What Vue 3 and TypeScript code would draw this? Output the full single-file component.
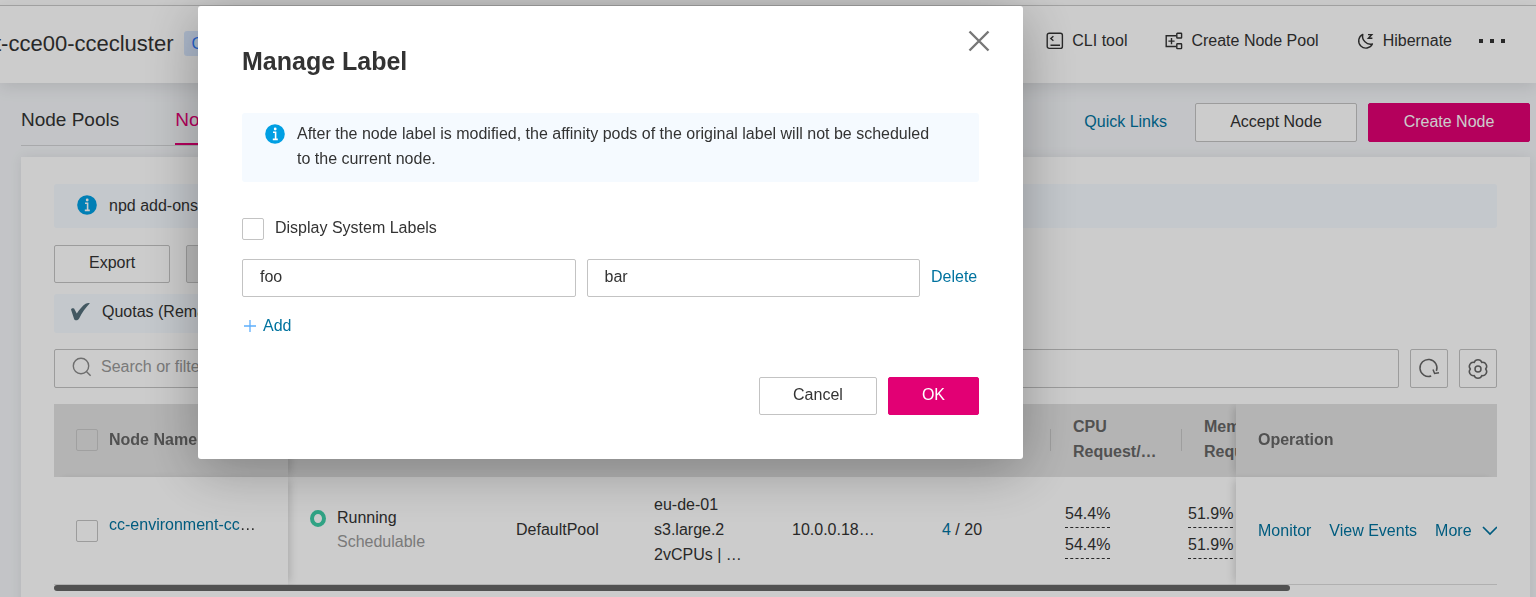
<script setup lang="ts">
import { ref } from 'vue'

interface LabelRow {
  id: number
  key: string
  value: string
}

const showSystem = ref(false)
const search = ref('')
const labels = ref<LabelRow[]>([{ id: 1, key: 'foo', value: 'bar' }])
const dialogOpen = ref(true)

const scrollThumb = 1443 / 1685

function addLabel() {
  labels.value.push({ id: Date.now(), key: '', value: '' })
}
function removeLabel(id: number) {
  labels.value = labels.value.filter((l) => l.id !== id)
}
</script>

<template>
  <div class="page">
    <header class="topbar">
      <div class="cluster">
        <h1>t-cce00-ccecluster</h1>
        <span class="badge">CCE</span>
      </div>
      <nav class="top-actions">
        <button type="button" class="plain">
          <svg width="18" height="18" viewBox="0 0 18 18" fill="none" stroke="currentColor" stroke-width="1.4">
            <rect x="1.2" y="1.2" width="15.2" height="15.2" rx="2" />
            <path d="M7.4 4.2 4.8 6.5 7.4 8.8M4.5 13.2H14" />
          </svg>
          CLI tool
        </button>
        <button type="button" class="plain">
          <svg width="18" height="18" viewBox="0 0 18 18" fill="none" stroke="currentColor" stroke-width="1.4">
            <path d="M11.2 3.7H1.2v10.8h10M3.4 9.1h6.2M6.5 6v6.2" />
            <rect x="11.8" y="1.2" width="4.8" height="4.8" rx="0.6" />
            <rect x="11.8" y="11.8" width="4.8" height="4.8" rx="0.6" />
          </svg>
          Create Node Pool
        </button>
        <button type="button" class="plain">
          <svg width="18" height="18" viewBox="0 0 18 18" fill="none" stroke="currentColor" stroke-width="1.4">
            <path d="M5.8 2.4a7.2 7.2 0 1 0 9.6 9.6A8 8 0 0 1 5.8 2.4Z" stroke-linejoin="round" />
            <path d="M11 2.6h3.8l-3.4 3.6h4" />
          </svg>
          Hibernate
        </button>
        <button type="button" class="plain dots" aria-label="More actions">
          <svg width="28" height="6" viewBox="0 0 28 6" fill="currentColor">
            <rect x="1" y="1" width="4" height="4" />
            <rect x="12" y="1" width="4" height="4" />
            <rect x="23" y="1" width="4" height="4" />
          </svg>
        </button>
      </nav>
    </header>

    <main class="content">
      <div class="toolbar">
        <nav class="tabs">
          <a href="#pools" class="tab">Node Pools</a>
          <a href="#nodes" class="tab active">Nodes</a>
        </nav>
        <div class="toolbar-actions">
          <a href="#links" class="link">Quick Links</a>
          <button type="button" class="btn">Accept Node</button>
          <button type="button" class="btn primary">Create Node</button>
        </div>
      </div>

      <section class="panel">
        <div class="notice">
          <svg class="info" width="20" height="20" viewBox="0 0 20 20">
            <circle cx="10" cy="10" r="9.8" fill="#009fe3" />
            <circle cx="10.2" cy="5" r="1.4" fill="#fff" />
            <path d="M8 8.2h2.6v6.8M7.8 15.4h5" fill="none" stroke="#fff" stroke-width="1.6" />
          </svg>
          <span>npd add-ons</span>
        </div>
        <div class="buttons">
          <button type="button" class="btn">Export</button>
          <button type="button" class="btn" disabled>Label</button>
        </div>
        <div class="quota">
          <svg width="20" height="20" viewBox="0 0 20 20">
            <path d="M1 7.4C1.6 6 4 5.8 4.6 7.4L6.8 11.4C9.4 7.4 12.4 4 15.6 1.8 17 .9 19.2.6 19.8 1.2 15.6 5.6 12 10.4 9.4 16 8.4 18.4 5.2 19.2 4.2 17.2Z" fill="#546e7a" />
          </svg>
          <span>Quotas (Remaining)</span>
        </div>
        <div class="search-row">
          <label class="search">
            <svg width="20" height="20" viewBox="0 0 20 20" fill="none" stroke="#8a8a8a" stroke-width="1.4">
              <circle cx="9" cy="9" r="7.7" />
              <path d="m14.6 14.8 4 4" />
            </svg>
            <input v-model="search" type="text" placeholder="Search or filter" aria-label="Search or filter" />
          </label>
          <button type="button" class="icon-btn" aria-label="Refresh">
            <svg width="22" height="22" viewBox="0 0 22 22" fill="none" stroke="currentColor" stroke-width="1.5">
              <path d="M13.2 18A8.5 8.5 0 1 1 18.4 13" />
              <path d="M15 11.4 16.6 15.5 21 14.7" />
            </svg>
          </button>
          <button type="button" class="icon-btn" aria-label="Settings">
            <svg width="22" height="22" viewBox="0 0 22 22" fill="none" stroke="currentColor" stroke-width="1.5">
              <path d="M18.6 11A4 4 0 0 1 14.8 17.6 4 4 0 0 1 7.2 17.6 4 4 0 0 1 3.4 11 4 4 0 0 1 7.2 4.4 4 4 0 0 1 14.8 4.4 4 4 0 0 1 18.6 11Z" stroke-linejoin="round" />
              <circle cx="11" cy="11" r="3" />
            </svg>
          </button>
        </div>

        <div class="table-wrap">
          <table>
            <colgroup>
              <col class="c-name" /><col class="c-status" /><col class="c-pool" /><col class="c-pool" />
              <col class="c-ip" /><col class="c-num" /><col class="c-num" /><col /><col class="c-ops" />
            </colgroup>
            <thead>
              <tr>
                <th class="stick-left">
                  <div class="name-cell"><input type="checkbox" aria-label="Select all nodes" /><span>Node Name</span></div>
                </th>
                <th>Status</th>
                <th>Node Pool</th>
                <th>Type</th>
                <th>IP Address</th>
                <th>Pods</th>
                <th class="divided">CPU<br />Request/…</th>
                <th class="divided">Memory<br />Request/…</th>
                <th class="stick-right">Operation</th>
              </tr>
            </thead>
            <tbody>
              <tr>
                <td class="stick-left">
                  <div class="name-cell">
                    <input type="checkbox" aria-label="Select node" />
                    <span class="node-name"><a href="#node" class="link">cc-environment-cc</a>…</span>
                  </div>
                </td>
                <td>
                  <div class="status">
                    <i class="ring"></i>
                    <div>Running<div class="muted">Schedulable</div></div>
                  </div>
                </td>
                <td>DefaultPool</td>
                <td>eu-de-01<br />s3.large.2<br />2vCPUs | …</td>
                <td>10.0.0.18…</td>
                <td><a href="#pods" class="link">4</a> / 20</td>
                <td class="usage"><span>54.4%</span><span>54.4%</span></td>
                <td class="usage tight"><span>51.9%</span><span>51.9%</span></td>
                <td class="stick-right">
                  <div class="ops">
                    <a href="#monitor" class="link">Monitor</a>
                    <a href="#events" class="link">View Events</a>
                    <button type="button" class="plain link more">
                      More
                      <svg width="16" height="10" viewBox="0 0 16 10" fill="none" stroke="currentColor" stroke-width="1.7">
                        <path d="m1 1 7 7 7-7" />
                      </svg>
                    </button>
                  </div>
                </td>
              </tr>
            </tbody>
          </table>
        </div>
        <div class="scrollbar"><div class="thumb" :style="{ width: scrollThumb * 100 + '%' }"></div></div>
      </section>
    </main>

    <div v-if="dialogOpen" class="overlay">
      <div class="dialog" role="dialog" aria-modal="true" aria-labelledby="dialog-title">
        <button type="button" class="close" aria-label="Close" @click="dialogOpen = false">
          <svg width="22" height="22" viewBox="0 0 22 22" fill="none" stroke="currentColor" stroke-width="2.4">
            <path d="m1.5 1.5 19 19M20.5 1.5l-19 19" />
          </svg>
        </button>
        <h2 id="dialog-title">Manage Label</h2>
        <div class="dialog-notice">
          <svg class="info" width="20" height="20" viewBox="0 0 20 20">
            <circle cx="10" cy="10" r="9.8" fill="#009fe3" />
            <circle cx="10.2" cy="5" r="1.4" fill="#fff" />
            <path d="M8 8.2h2.6v6.8M7.8 15.4h5" fill="none" stroke="#fff" stroke-width="1.6" />
          </svg>
          <p>After the node label is modified, the affinity pods of the original label will not be scheduled to the current node.</p>
        </div>
        <label class="check"><input v-model="showSystem" type="checkbox" /><span>Display System Labels</span></label>
        <div v-for="row in labels" :key="row.id" class="label-row">
          <input v-model="row.key" type="text" aria-label="Label key" />
          <input v-model="row.value" type="text" aria-label="Label value" />
          <button type="button" class="plain link delete" @click="removeLabel(row.id)">Delete</button>
        </div>
        <button type="button" class="plain link add" @click="addLabel">
          <svg width="12" height="12" viewBox="0 0 12 12" stroke="#5eaefc" stroke-width="1.3">
            <path d="M6 0v12M0 6h12" />
          </svg>
          Add
        </button>
        <div class="dialog-actions">
          <button type="button" class="btn" @click="dialogOpen = false">Cancel</button>
          <button type="button" class="btn primary" @click="dialogOpen = false">OK</button>
        </div>
      </div>
    </div>
  </div>
</template>

<style>
body {
  margin: 0;
}
</style>

<style scoped>
* {
  box-sizing: border-box;
}
.page {
  position: relative;
  height: 100vh;
  overflow: hidden;
  padding-top: 5px;
  background: #fff;
  color: #333;
  font: 16px/25px 'Liberation Sans', Arial, sans-serif;
}
svg {
  display: block;
  flex: none;
}
button,
input {
  font: inherit;
  color: inherit;
}
.plain {
  display: inline-flex;
  align-items: center;
  gap: 8px;
  padding: 0;
  border: 0;
  background: none;
}
.link {
  color: #00739f;
  text-decoration: none;
}
.btn {
  height: 38px;
  padding: 0 34px 4px;
  border: 1px solid #c3c3c3;
  border-radius: 2px;
  background: #fff;
}
.btn.primary {
  border-color: #e20074;
  background: #e20074;
  color: #fff;
}
.btn:disabled {
  background: #ebebeb;
}
input[type='checkbox'] {
  appearance: none;
  flex: none;
  width: 22px;
  height: 22px;
  margin: 0;
  border: 1px solid #c3c3c3;
  border-radius: 2px;
  background: #fff;
}

.topbar {
  position: relative;
  z-index: 1;
  display: flex;
  justify-content: space-between;
  height: 78px;
  border-top: 1px solid #c9c9c9;
  background: #fff;
  box-shadow: 0 4px 16px rgba(0, 0, 0, 0.1);
}
.cluster {
  display: flex;
  align-items: center;
  gap: 10px;
  margin-left: -5px;
  padding-bottom: 2px;
}
h1 {
  margin: 0;
  font-size: 22px;
  font-weight: 400;
}
.badge {
  padding: 0 8px;
  border-radius: 3px;
  background: #d9e8ff;
  color: #2e7bff;
}
.top-actions {
  display: flex;
  align-items: center;
  height: 69px;
  gap: 38px;
  padding-right: 30px;
}
.dots {
  margin-left: -12px;
}

.content {
  height: 100%;
  padding: 20px 6px 0 21px;
  background: #f4f6f9;
}
.toolbar {
  display: flex;
  justify-content: space-between;
  align-items: flex-start;
  height: 54px;
}
.tabs {
  display: flex;
  gap: 56px;
  height: 43px;
  padding-right: 20px;
  border-bottom: 1px solid #d2d4d6;
}
.tab {
  height: 42px;
  padding-top: 4px;
  color: #333;
  font-size: 19px;
  text-decoration: none;
}
.tab.active {
  border-bottom: 2px solid #e20074;
  color: #e20074;
}
.toolbar-actions {
  display: flex;
  align-items: center;
  gap: 11px;
}
.toolbar-actions .link {
  padding: 0 17px 2px 0;
}
.toolbar-actions .btn {
  min-width: 162px;
  height: 39px;
  padding-bottom: 2px;
}
.panel {
  height: 100%;
  padding: 27px 33px;
  background: #fff;
  box-shadow: 0 0 12px rgba(0, 0, 0, 0.08);
}
.notice {
  display: flex;
  align-items: center;
  gap: 12px;
  height: 44px;
  padding: 0 0 2px 23px;
  border-radius: 3px;
  background: #f5faff;
}
.buttons {
  display: flex;
  gap: 16px;
  margin: 17px 0 11px;
}
.quota {
  display: flex;
  align-items: center;
  gap: 12px;
  width: fit-content;
  height: 39px;
  padding: 0 16px 4px;
  border-radius: 3px;
  background: #f5faff;
}
.search-row {
  display: flex;
  gap: 11px;
  margin: 16px 0;
}
.search {
  display: flex;
  flex: 1;
  align-items: center;
  gap: 9px;
  height: 39px;
  padding: 0 17px 3px;
  border: 1px solid #c3c3c3;
  border-radius: 2px;
}
.search input {
  flex: 1;
  padding: 0 0 2px;
  border: 0;
  outline: 0;
  background: none;
}
.search input::placeholder {
  color: #999;
}
.icon-btn {
  display: grid;
  place-items: center;
  width: 38px;
  height: 39px;
  padding: 0;
  border: 1px solid #c3c3c3;
  border-radius: 2px;
  background: none;
  color: #666;
}

.table-wrap {
  overflow: hidden;
}
table {
  width: 1685px;
  table-layout: fixed;
  border-collapse: separate;
  border-spacing: 0;
}
.c-name {
  width: 234px;
}
.c-status {
  width: 206px;
}
.c-pool {
  width: 138px;
}
.c-ip {
  width: 150px;
}
.c-num {
  width: 131px;
}
.c-ops {
  width: 261px;
}
th,
td {
  position: relative;
  padding: 0 0 2px 22px;
  text-align: left;
}
th {
  height: 73px;
  background: #e2e2e2;
  color: #666;
}
th.divided {
  padding-bottom: 4px;
}
td {
  height: 108px;
  border-bottom: 1px solid #dcdcdc;
  background: #fff;
}
th input[type='checkbox'] {
  border-color: #c9c9c9;
  background: none;
}
.divided::before {
  content: '';
  position: absolute;
  top: 25px;
  left: -1px;
  width: 1px;
  height: 22px;
  background: #c6c6c6;
}
.stick-left,
.stick-right {
  position: sticky;
  z-index: 2;
}
td.stick-left,
td.stick-right {
  padding-bottom: 0;
}
.stick-left {
  left: 0;
  box-shadow: 5px 0 8px -3px rgba(0, 0, 0, 0.16);
}
.stick-right {
  right: 0;
  box-shadow: -5px 0 8px -3px rgba(0, 0, 0, 0.16);
}
.name-cell {
  display: flex;
  align-items: center;
  gap: 11px;
}
.node-name {
  margin-bottom: 12px;
}
.status {
  display: flex;
  gap: 11px;
  line-height: 24px;
}
.ring {
  width: 16px;
  height: 17px;
  margin-top: 4px;
  border: 4px solid #3dcca6;
  border-radius: 50%;
}
.muted {
  color: #999;
}
.usage {
  padding-left: 14px;
}
.usage.tight {
  padding-left: 6px;
}
.usage span {
  display: table;
  padding-bottom: 1px;
  border-bottom: 1px dashed #333;
}
.usage span + span {
  margin-top: 4px;
}
.ops {
  display: flex;
  align-items: center;
  gap: 18px;
  white-space: nowrap;
}
.more {
  gap: 10px;
}
.scrollbar {
  height: 6px;
}
.thumb {
  height: 6px;
  border-radius: 3px;
  background: #666;
}

.overlay {
  position: absolute;
  inset: 0;
  z-index: 10;
  padding: 6px 0 0 198px;
  background: rgba(0, 0, 0, 0.2);
}
.dialog {
  position: relative;
  max-width: 825px;
  padding: 44px;
  border-radius: 3px;
  background: #fff;
  box-shadow: 0 10px 56px rgba(0, 0, 0, 0.3);
}
.close {
  position: absolute;
  top: 24px;
  right: 33px;
  padding: 0;
  border: 0;
  background: none;
  color: #777;
}
h2 {
  margin: 0 0 41px;
  font-size: 25px;
  line-height: 22px;
}
.dialog-notice {
  display: flex;
  gap: 12px;
  padding: 8px 33px 11px 23px;
  border-radius: 3px;
  background: #f5faff;
}
.dialog-notice .info {
  margin-top: 3px;
}
p {
  margin: 0;
}
.check {
  display: flex;
  align-items: flex-end;
  gap: 11px;
  height: 22px;
  margin: 36px 0 19px;
}
.label-row {
  display: flex;
  gap: 11px;
  align-items: center;
}
.label-row input {
  flex: 1;
  min-width: 0;
  height: 38px;
  padding: 0 17px 2px;
  border: 1px solid #c3c3c3;
  border-radius: 2px;
}
.delete {
  min-width: 48px;
  padding-bottom: 3px;
}
.add {
  display: flex;
  gap: 7px;
  margin: 16px 0 0 2px;
}
.dialog-actions {
  display: flex;
  justify-content: flex-end;
  gap: 11px;
  margin-top: 39px;
}
.dialog-actions .btn {
  padding: 0 33px 4px;
}
</style>
